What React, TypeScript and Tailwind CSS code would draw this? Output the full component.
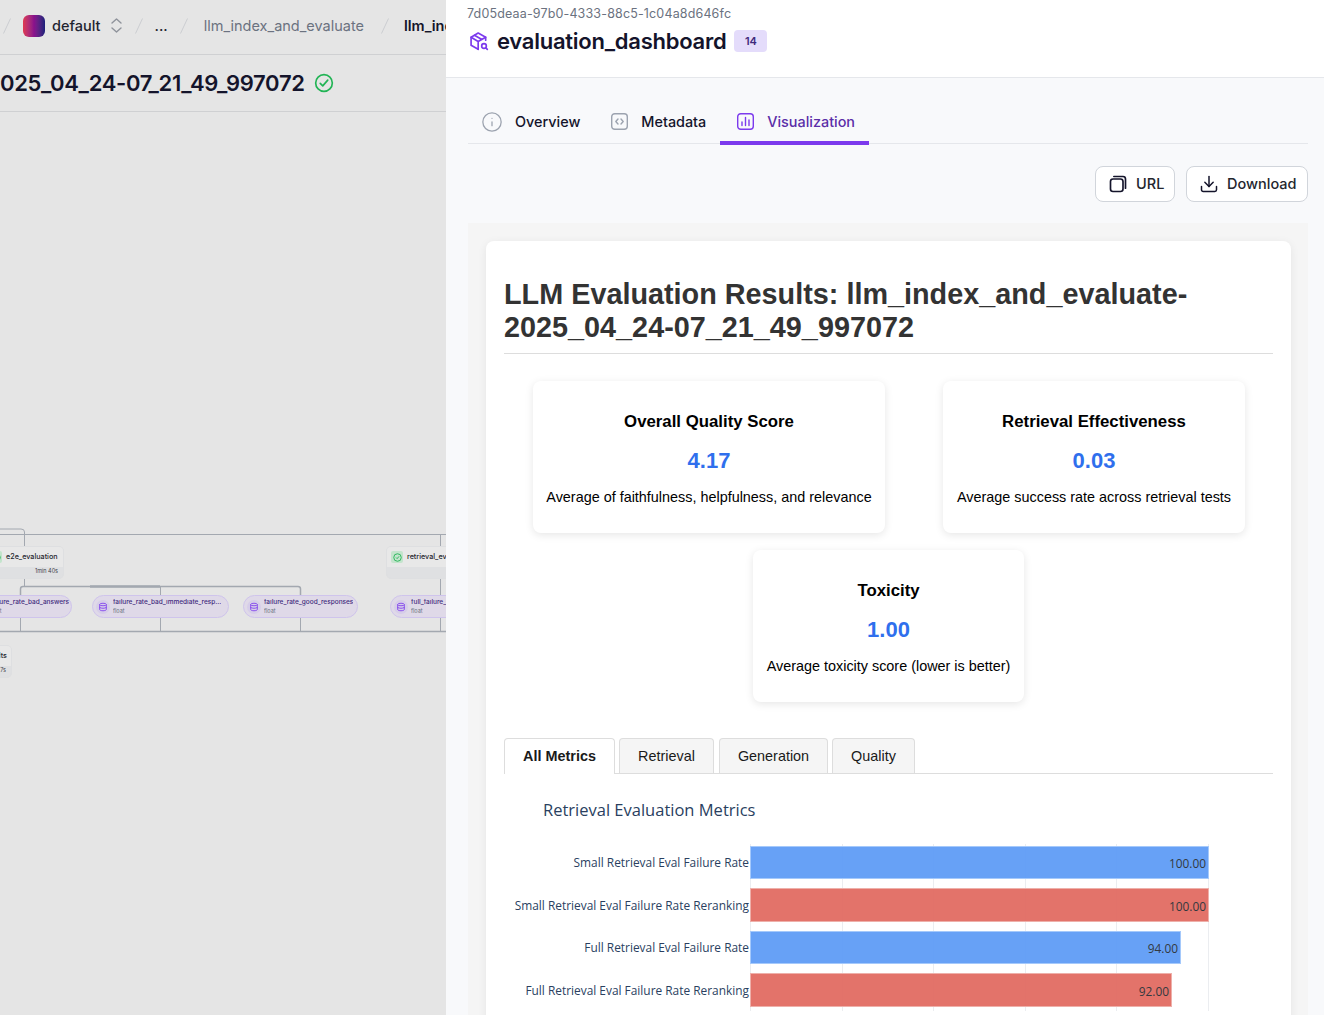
import React from "react";
import { Info, Download } from "lucide-react";

const sans = "font-['Inter',sans-serif]";
const arial = "font-['Liberation_Sans',Arial,sans-serif]";
const plotly = "font-['Open_Sans',sans-serif]";

const Slash = () => (
  <svg width="8" height="16" viewBox="0 0 8 16" className="shrink-0">
    <path d="M7.5 0.5 L0.5 15.5" stroke="#cbcdd1" strokeWidth="1" />
  </svg>
);

const Crumbs = () => (
  <div className="flex h-[55px] shrink-0 items-center border-b border-[#cfd0d2] pb-[3px] pl-[3px]">
    <Slash />
    <div className="ml-[12px] h-[22px] w-[22px] shrink-0 rounded-[6px] bg-gradient-to-r from-[#e0384f] via-[#8a0f8c] to-[#1b1f7a]" />
    <span className="ml-[7px] text-[14.5px] font-medium text-[#1f2430]">default</span>
    <svg width="11" height="15" viewBox="0 0 11 15" fill="none" stroke="#8f939b" strokeWidth="1.4" strokeLinecap="round" strokeLinejoin="round" className="ml-[10px] shrink-0">
      <path d="M1 5 5.5 1 10 5M1 10l4.500 4 4.500-4" />
    </svg>
    <span className="ml-[13px]"><Slash /></span>
    <span className="ml-[12px] text-[14.5px] font-medium text-[#1f2430]">...</span>
    <span className="ml-[12px]"><Slash /></span>
    <span className="ml-[16px] whitespace-nowrap text-[14.5px] text-[#6b7280]">llm_index_and_evaluate</span>
    <span className="ml-[17px]"><Slash /></span>
    <span className="ml-[15px] whitespace-nowrap text-[14.5px] font-semibold text-[#14142b]">llm_index_and_evaluate</span>
  </div>
);

const StepNode = ({ left, top, width, name, time, check, alignEnd }: { left: number; top: number; width: number; name: string; time?: string; check?: boolean; alignEnd?: boolean }) => (
  <div className="absolute overflow-hidden rounded-[5px] border border-[#dedfe1] bg-[#dfe0e2]" style={{ left, top, width }}>
    <div className={`flex h-[20px] items-center gap-[4px] bg-[#e8e8e8] px-[4px] ${alignEnd ? "justify-end" : ""}`}>
      {check && (
        <span className="flex h-[12px] w-[12px] shrink-0 items-center justify-center rounded-[2px] bg-[#c3e4cc]">
          <svg width="9" height="9" viewBox="0 0 24 24" fill="none" stroke="#22b455" strokeWidth="2.4"><circle cx="12" cy="12" r="10" /><path d="m8 12 3 3 5-6" /></svg>
        </span>
      )}
      <span className="whitespace-nowrap text-[7.2px] font-medium text-[#24262e]">{name}</span>
    </div>
    <div className="flex h-[11px] items-center justify-end pb-[3px] pr-[5px] text-[5.5px] text-[#3f424a]">{time}</div>
  </div>
);

const ArtifactNode = ({ left, width, name }: { left: number; width: number; name: string }) => (
  <div className="absolute top-[61px] flex h-[23px] items-center rounded-full border border-[#cfc4ec] bg-[#dfd9e8] pl-[3px]" style={{ left, width }}>
    <span className="flex h-[14px] w-[14px] shrink-0 items-center justify-center rounded-full bg-[#d6cde9]">
      <svg width="10" height="10" viewBox="0 0 24 24" fill="none" stroke="#7c3aed" strokeWidth="2"><ellipse cx="12" cy="6" rx="8" ry="3" /><path d="M4 6v12c0 1.700 3.600 3 8 3s8-1.300 8-3V6M4 12c0 1.700 3.600 3 8 3s8-1.300 8-3" /></svg>
    </span>
    <div className="ml-[3px] flex flex-col overflow-hidden leading-none">
      <span className="whitespace-nowrap text-[6.5px] font-medium text-[#3f2a7d]">{name}</span>
      <span className="mt-[3px] text-[5.5px] text-[#6b7280]">float</span>
    </div>
  </div>
);

const Dag = () => (
  <div className="relative flex-1 overflow-hidden">
    <div className="absolute left-0 right-0 top-[422px] h-[130px]">
      <svg width="446" height="130" className="absolute left-0 top-0 overflow-visible" fill="none" stroke="#a3a8b0">
        <path d="M0 0.5H446" />
        <path d="M0 -5H21Q24.500 -5 24.500 -2V12M24.500 45V52" />
        <path d="M20.500 61V55Q20.500 52.500 23 52.500H298Q300.500 52.500 300.500 55V61" strokeWidth="1.500" />
        <path d="M90 52.500H160" strokeWidth="2.500" />
        <path d="M160.500 52V61M20.500 84V97M160.500 84V97M300.500 84V97M440.500 0V97" />
        <path d="M0 97.500H446" strokeWidth="1.500" />
      </svg>
      <ArtifactNode left={-31} width={103} name="failure_rate_bad_answers" />
      <ArtifactNode left={92} width={137} name="failure_rate_bad_immediate_resp..." />
      <ArtifactNode left={243} width={115} name="failure_rate_good_responses" />
      <ArtifactNode left={390} width={120} name="full_failure_rate_reranking" />
      <StepNode left={-15} top={12} width={79} name="e2e_evaluation" time="1min 40s" check />
      <StepNode left={386} top={12} width={110} name="retrieval_evaluation" check />
      <StepNode left={-60} top={111} width={72} name="visualize_results" time="7s" alignEnd />
    </div>
  </div>
);

const LeftPanel = () => (
  <div className={`flex h-full w-[446px] shrink-0 flex-col overflow-hidden bg-[#e5e5e5] ${sans}`}>
    <Crumbs />
    <div className="flex h-[57px] shrink-0 items-center gap-[9px] overflow-hidden border-b border-[#cfd0d2]">
      <span className="whitespace-nowrap text-[22px] font-semibold leading-none tracking-[-0.32px] text-[#14142b]">025_04_24-07_21_49_997072</span>
      <svg width="20" height="20" viewBox="0 0 24 24" fill="none" stroke="#22b455" strokeWidth="2"><circle cx="12" cy="12" r="10" /><path d="m7.500 12.500 3 3 6-7" strokeLinecap="round" strokeLinejoin="round" /></svg>
    </div>
    <Dag />
  </div>
);

const TabLink = ({ icon, label, active, className }: { icon: React.ReactNode; label: string; active?: boolean; className: string }) => (
  <div className={`flex h-[46px] items-center border-b-[4px] pt-[3px] ${active ? "border-[#7c3aed]" : "border-transparent"} ${className}`}>
    {icon}
    <span className={`text-[14.4px] font-medium ${active ? "text-[#5b2ea8]" : "text-[#14142b]"}`}>{label}</span>
  </div>
);

const Btn = ({ icon, label, className }: { icon: React.ReactNode; label: string; className: string }) => (
  <div className={`flex h-[36px] items-center gap-[8px] rounded-[8px] border border-[#d1d5db] bg-white pl-[12px] text-[14.5px] font-medium text-[#24262e] ${className}`}>
    {icon}
    {label}
  </div>
);

const ScoreCard = ({ title, value, note, className }: { title: string; value: string; note: string; className: string }) => (
  <div className={`flex h-[152px] flex-col items-center rounded-[8px] bg-white pt-[31px] shadow-[0_2px_8px_rgba(0,0,0,0.1)] ${className}`}>
    <div className="text-[16.8px] font-bold leading-[20px] text-black">{title}</div>
    <div className="mt-[17px] text-[22px] font-bold leading-[24px] text-[#2f6fed]">{value}</div>
    <div className="mt-[15px] whitespace-nowrap text-[14.4px] leading-[18px] text-black">{note}</div>
  </div>
);

const rows = [
  { name: "Small Retrieval Eval Failure Rate", w: 459, v: "100.00", red: false },
  { name: "Small Retrieval Eval Failure Rate Reranking", w: 459, v: "100.00", red: true },
  { name: "Full Retrieval Eval Failure Rate", w: 431, v: "94.00", red: false },
  { name: "Full Retrieval Eval Failure Rate Reranking", w: 422, v: "92.00", red: true },
];

const Chart = () => (
  <div className={`relative mt-[24.5px] ${plotly}`}>
    <div className="absolute bottom-[-4px] left-[246px] top-[-2px] flex w-[459px] justify-between">
      {[0, 1, 2, 3, 4, 5].map((i) => (
        <div key={i} className="h-full w-px bg-[#ebedf0]" />
      ))}
    </div>
    <div className="flex flex-col gap-[9px]">
      {rows.map((r) => (
        <div key={r.name} className="flex h-[33.5px] items-center">
          <div className="w-[246px] shrink-0 whitespace-nowrap pr-px pt-[2px] text-right text-[11.9px] text-[#2a3f5f]">{r.name}</div>
          <div
            className={`relative flex h-full items-center justify-end border pr-[2px] ${r.red ? "border-[#eeb0aa] bg-[#e26b62]/95" : "border-[#a5c9fb] bg-[#5f9cf5]/95"}`}
            style={{ width: r.w }}
          >
            <span className="pt-[4px] text-[11.9px] text-[#33393f]">{r.v}</span>
          </div>
        </div>
      ))}
    </div>
  </div>
);

const ResultTabs = () => (
  <div className={`mt-[36px] flex h-[36px] items-end gap-[4px] border-b border-[#dddddd] text-[14.4px] text-[#1a1a1a] ${arial}`}>
    <div className="z-10 -mb-px flex h-[36px] w-[111px] items-center justify-center rounded-t-[4px] border border-b-0 border-[#dddddd] bg-white font-bold">All Metrics</div>
    <div className="flex h-[35px] w-[95px] items-center justify-center rounded-t-[4px] border border-b-0 border-[#dddddd] bg-[#f5f5f5] pt-px">Retrieval</div>
    <div className="ml-px flex h-[35px] w-[109px] items-center justify-center rounded-t-[4px] border border-b-0 border-[#dddddd] bg-[#f5f5f5] pt-px">Generation</div>
    <div className="flex h-[35px] w-[83px] items-center justify-center rounded-t-[4px] border border-b-0 border-[#dddddd] bg-[#f5f5f5] pt-px">Quality</div>
  </div>
);

const Report = () => (
  <div className="mt-[21px] h-full bg-[#f5f5f5] px-[18px] pt-[18px]">
    <div className={`h-[900px] w-[805px] rounded-[8px] bg-white px-[18px] shadow-[0_2px_10px_rgba(0,0,0,0.07)] ${arial}`}>
      <div className="border-b border-[#dddddd] pb-[9px] pt-[37px] text-[28.8px] font-bold leading-[33px] text-[#333333]">
        LLM Evaluation Results: llm_index_and_evaluate-
        <br />
        2025_04_24-07_21_49_997072
      </div>
      <div className="mt-[27px] flex justify-between pl-[29px] pr-[28px]">
        <ScoreCard className="w-[352px]" title="Overall Quality Score" value="4.17" note="Average of faithfulness, helpfulness, and relevance" />
        <ScoreCard className="w-[302px]" title="Retrieval Effectiveness" value="0.03" note="Average success rate across retrieval tests" />
      </div>
      <div className="mt-[17px] flex justify-center">
        <ScoreCard className="w-[271px]" title="Toxicity" value="1.00" note="Average toxicity score (lower is better)" />
      </div>
      <ResultTabs />
      <div className={`mt-[25px] pl-[39px] text-[16.5px] leading-[22px] text-[#2a3f5f] ${plotly}`}>Retrieval Evaluation Metrics</div>
      <Chart />
    </div>
  </div>
);

const RightPanel = () => (
  <div className={`relative flex h-full min-w-0 flex-1 flex-col overflow-hidden bg-[#f8f9fb] ${sans}`}>
    <div className="h-[78px] shrink-0 border-b border-[#e5e7eb] bg-white pl-[22px] pt-[6px]">
      <div className="-ml-px text-[12.5px] leading-[16px] tracking-[0.15px] text-[#6b7280]">7d05deaa-97b0-4333-88c5-1c04a8d646fc</div>
      <div className="mt-[4px] flex items-center">
        <svg width="20" height="20" viewBox="0 0 24 24" fill="none" stroke="#7c3aed" strokeWidth="2" strokeLinecap="round" strokeLinejoin="round" className="ml-px">
          <path d="M20 11V7.500L11 2.500 2.500 7.500V17L11 22" />
          <path d="M2.500 7.500 11 12.500 20 7.500M11 12.500V22M6.500 5.200 15.500 10.200" />
          <circle cx="18" cy="18" r="2.800" />
          <path d="m20.200 20.200 1.800 1.800" />
        </svg>
        <span className="ml-[8px] text-[22px] font-semibold leading-[30px] tracking-[-0.25px] text-[#14142b]">evaluation_dashboard</span>
        <span className="ml-[8px] flex h-[22px] w-[33px] items-center justify-center rounded-[4px] bg-[#e4dcfb] text-[11px] font-semibold text-[#3f2a7d]">14</span>
      </div>
    </div>
    <div className="flex-1 pl-[22px] pr-[16px] pt-[21px]">
      <div className="flex h-[45px] border-b border-[#e5e7eb]">
        <TabLink className="gap-[12px] pl-[15px] pr-[14px]" icon={<Info size={22} strokeWidth={1.4} className="-ml-[2px] text-[#9ca3af]" />} label="Overview" />
        <TabLink
          className="gap-[13px] pl-[17px] pr-[14px]"
          icon={
            <svg width="17" height="17" viewBox="0 0 17 17" fill="none" stroke="#9ca3af" strokeWidth="1.400" strokeLinecap="round" strokeLinejoin="round">
              <rect x="0.700" y="0.700" width="15.600" height="15.600" rx="3" />
              <path d="M7 6 4.800 8.500 7 11M10 6l2.200 2.500L10 11" />
            </svg>
          }
          label="Metadata"
        />
        <TabLink
          active
          className="gap-[13px] pl-[17px] pr-[14px]"
          icon={
            <svg width="17" height="17" viewBox="0 0 17 17" fill="none" stroke="#7c3aed" strokeWidth="1.400" strokeLinecap="round">
              <rect x="0.700" y="0.700" width="15.600" height="15.600" rx="3" />
              <path d="M5 9v3.500M8.500 4.500v8M12 7v5.500" />
            </svg>
          }
          label="Visualization"
        />
      </div>
      <div className="mt-[22px] flex justify-end gap-[11px]">
        <Btn
          className="w-[80px]"
          label="URL"
          icon={<svg width="20" height="20" viewBox="0 0 24 24" fill="none" stroke="#14142b" strokeWidth="2" strokeLinejoin="round"><rect x="3" y="6" width="15" height="15" rx="3" /><path d="M7 3h11a3 3 0 0 1 3 3v11" strokeLinecap="round" /></svg>}
        />
        <Btn className="w-[122px]" label="Download" icon={<Download size={20} strokeWidth={1.8} className="text-[#14142b]" />} />
      </div>
      <Report />
    </div>
  </div>
);

export default function App() {
  return (
    <div className="flex h-[1015px] w-[1324px] overflow-hidden bg-white">
      <LeftPanel />
      <RightPanel />
    </div>
  );
}
